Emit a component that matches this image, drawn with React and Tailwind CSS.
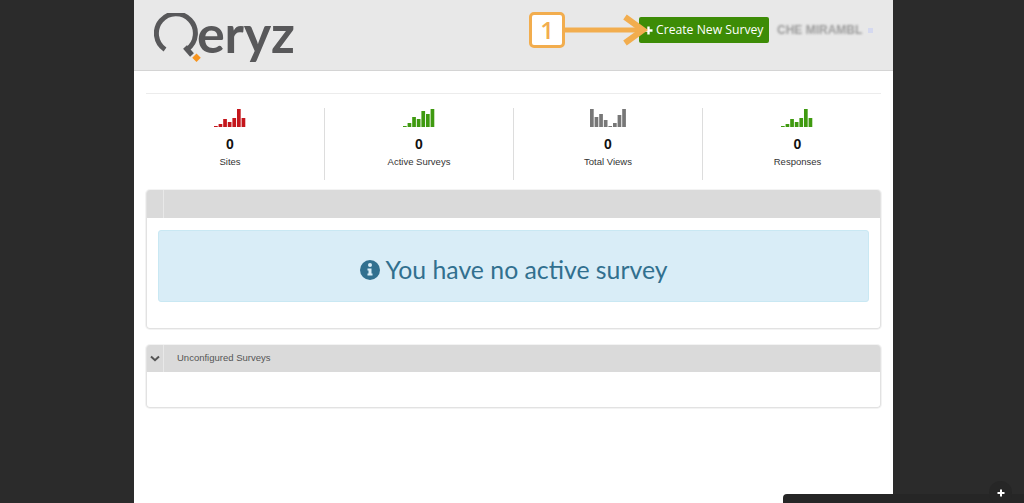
const stats = [
  { label: 'Sites', color: '#c4161c', bars: [1, 3, 8, 5, 9, 18, 9] },
  { label: 'Active Surveys', color: '#3f9a10', bars: [1, 4, 10, 8, 16, 13, 18] },
  { label: 'Total Views', color: '#777777', bars: [18, 10, 13, 7, 1, 4, 12, 18] },
  { label: 'Responses', color: '#3f9a10', bars: [1, 3, 8, 5, 9, 18, 9] },
];

function Bars({ bars, color }) {
  return (
    <svg width={bars.length * 4.6} height="18" viewBox={`0 0 ${bars.length * 4.6} 18`}>
      {bars.map((h, i) => (
        <rect key={i} x={i * 4.6} y={18 - h} width="3.7" height={h} fill={color} />
      ))}
    </svg>
  );
}

function Logo() {
  return (
    <div className="flex items-center mt-[5px]">
      <svg width="50" height="50" viewBox="0 0 50 50" className="shrink-0">
        <path d="M11 36.5 A19.5 19.5 0 1 1 33.5 36" fill="none" stroke="#58585a" strokeWidth="5" />
        <path d="M31 34 L38 42" fill="none" stroke="#58585a" strokeWidth="5" />
        <rect x="39.5" y="46" width="6" height="6" transform="rotate(45 42.5 49) translate(-3 -3)" fill="#f7941e" />
      </svg>
      <span className="font-['Lato',sans-serif] font-bold text-[52px] leading-none text-[#58585a] -ml-[7px] -mt-[9px] tracking-[-0.2px]">
        eryz
      </span>
    </div>
  );
}

function PanelHeader({ title, chevron, tall }) {
  return (
    <div className={`flex ${tall ? 'h-[28px]' : 'h-[27px]'} bg-[#dadada] rounded-t-[3px]`}>
      <div className="w-[17px] shrink-0 border-r border-[#e8e8e8] flex items-center justify-center">
        {chevron && (
          <svg width="10" height="7" viewBox="0 0 10 7">
            <path d="M1 1.5 L5 5.2 L9 1.5" fill="none" stroke="#555555" strokeWidth="2" />
          </svg>
        )}
      </div>
      {title && (
        <div className="pl-[13px] flex items-center text-[9.5px] text-[#555] font-['Liberation_Sans',sans-serif]">
          {title}
        </div>
      )}
    </div>
  );
}

export default function App() {
  return (
    <div className="relative h-[503px] overflow-hidden bg-[#2b2b2b]">
      <div className="ml-[134px] w-[759px] h-full bg-white">
        <header className="h-[71px] bg-[#e8e8e8] border-b border-[#d4d4d4] flex items-center justify-between pl-[20px] pr-[20px]">
          <Logo />
          <div className="flex items-center -mt-[10px]">
            <button className="h-[26px] w-[130px] bg-[#3d8c06] rounded-[2px] text-white text-[12.2px] font-['Open_Sans',sans-serif] flex items-center gap-[3px] pl-[5px]">
              <svg width="9" height="9" viewBox="0 0 9 9">
                <path d="M4.5 0.5 V8.5 M0.5 4.5 H8.5" stroke="#ffffff" strokeWidth="2.4" />
              </svg>
              Create New Survey
            </button>
            <span className="ml-[8px] w-[85px] text-[12px] whitespace-nowrap text-[#9a9a9a] font-bold font-['Liberation_Sans',sans-serif] blur-[1.2px]">
              CHE MIRAMBL
            </span>
            <span className="ml-[6px] w-[5px] h-[5px] bg-[#d5d9ef] blur-[0.5px]" />
          </div>
        </header>

        <main className="px-[12px] pt-[22px]">
          <div className="border-t border-[#ececec]" />
          <div className="-ml-[10px] mt-[14px] grid grid-cols-[189px_189px_189px_189px] h-[72px]">
            {stats.map((s, i) => (
              <div
                key={s.label}
                className={`flex flex-col items-center pt-[1px] ${i < 3 ? 'border-r border-[#dddddd]' : ''}`}
              >
                <Bars bars={s.bars} color={s.color} />
                <div className="mt-[7px] text-[14px] leading-[20px] font-bold text-[#111] font-['Liberation_Sans',sans-serif]">0</div>
                <div className="mt-[1px] text-[9.5px] leading-[14px] text-[#333] font-['Liberation_Sans',sans-serif]">{s.label}</div>
              </div>
            ))}
          </div>

          <section className="mt-[10px] h-[139px] border border-t-0 border-[#e2e2e2] shadow-[0_0_0_1px_#f3f3f3] rounded-[4px]">
            <PanelHeader tall />
            <div className="px-[11px] pt-[12px]">
              <div className="h-[72px] pt-[8px] rounded-[3px] bg-[#d9edf7] border border-[#c9e8f3] flex items-center justify-center gap-[6px] text-[#31708f] text-[24.8px] font-['Lato',sans-serif]">
                <svg width="20" height="20" viewBox="0 0 20 20">
                  <circle cx="10" cy="10" r="10" fill="#31708f" />
                  <circle cx="10" cy="5" r="2" fill="#d9edf7" />
                  <path d="M7.5 8.5 H11.5 V13.5 H12.5 V15.5 H7.5 V13.5 H8.5 V10.5 H7.5 Z" fill="#d9edf7" />
                </svg>
                You have no active survey
              </div>
            </div>
          </section>

          <section className="mt-[16px] h-[63px] border border-t-0 border-[#e2e2e2] shadow-[0_0_0_1px_#f3f3f3] rounded-[4px]">
            <PanelHeader title="Unconfigured Surveys" chevron />
          </section>
        </main>
      </div>

      {/* annotation over the header */}
      <div className="absolute left-[529px] top-[12px] w-[36px] h-[36px] rounded-[5px] border-[3px] border-[#f2ad4e] bg-white flex items-center justify-center text-[#f2ad4e] text-[24px] font-semibold font-['Open_Sans',sans-serif]">
        1
      </div>
      <svg className="absolute left-[565px] top-[14px]" width="90" height="32" viewBox="0 0 90 32">
        <path d="M0 16 H78" stroke="#f2ad4e" strokeWidth="5" />
        <path d="M60 3 L78 16 L60 29" fill="none" stroke="#f2ad4e" strokeWidth="6" />
      </svg>

      {/* docked chat widget */}
      <div className="absolute right-0 bottom-0 w-[241px] h-[9px] rounded-tl-[4px] bg-[#262626]" />
      <div className="absolute left-[989px] top-[481px] w-[23px] h-[23px] rounded-full bg-[#262626] flex items-center justify-center">
        <svg width="8" height="8" viewBox="0 0 8 8">
          <path d="M4 0.5 V7.5 M0.5 4 H7.5" stroke="#ffffff" strokeWidth="2" />
        </svg>
      </div>
    </div>
  );
}
